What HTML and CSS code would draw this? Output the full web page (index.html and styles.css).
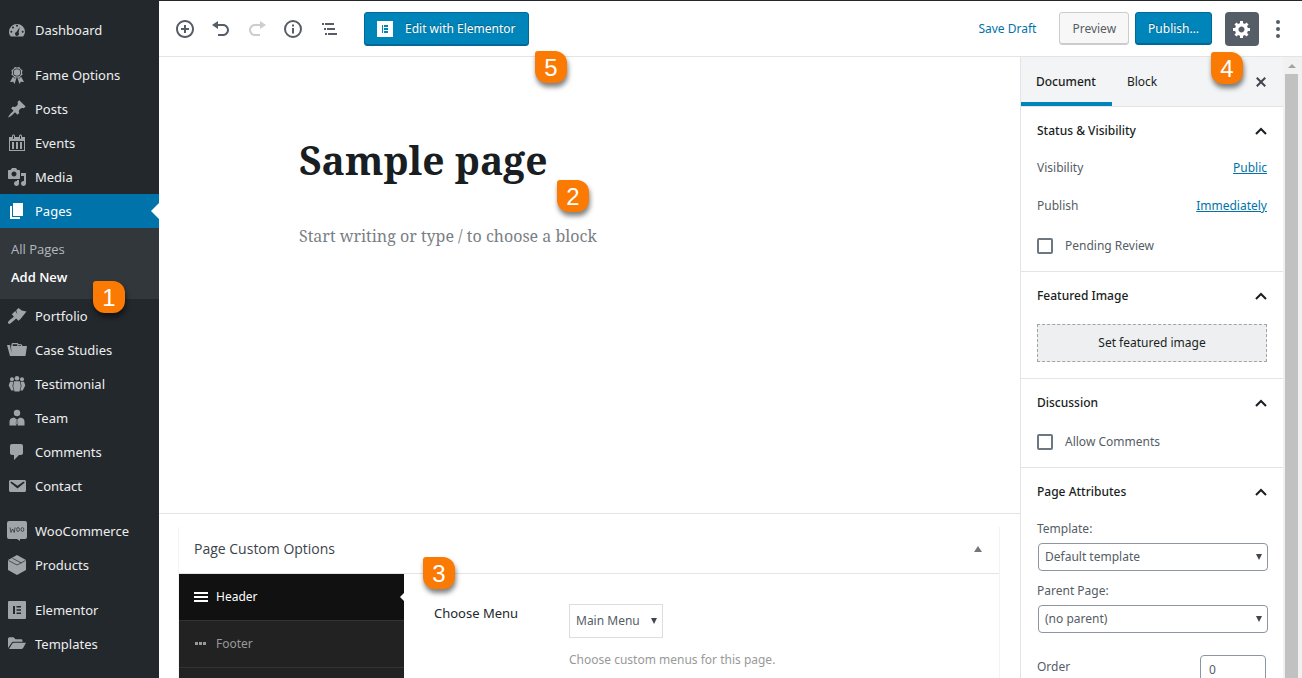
FILE: index.html
```html
<!DOCTYPE html>
<html lang="en">
<head>
<meta charset="utf-8">
<meta name="viewport" content="width=device-width, initial-scale=1">
<title>Edit Page</title>
<link rel="stylesheet" href="styles.css">
</head>
<body>
<div class="app">
  <nav class="sidebar" aria-label="Admin menu">
    <a class="item" href="#"><svg viewBox="0 0 20 20"><path fill-rule="evenodd" d="M3.8 16.5h12.4A8.2 8.2 0 0 0 18 12a8 8 0 1 0-16 0c0 1.700.6 3.300 1.800 4.500zM9 5.800a1 1 0 1 0 2 0a1 1 0 1 0-2 0zM5 7.500a1 1 0 1 0 2 0a1 1 0 1 0-2 0zM3.300 11.800a1 1 0 1 0 2 0a1 1 0 1 0-2 0zM14.700 11.800a1 1 0 1 0 2 0a1 1 0 1 0-2 0zM12.800 7l-1.200 5.600a2 2 0 1 1-2.200-.6z"/></svg>Dashboard</a>
    <a class="item spaced" href="#"><svg viewBox="0 0 20 20"><path fill-rule="evenodd" d="M4.460 5.160L5 7.460l-.54 2.290 2.010 1.240L7.700 13l2.300-.54 2.300.54 1.230-2.010 2.010-1.240L15 7.460l.54-2.300-2-1.240-1.240-2.010-2.300.55-2.290-.54-1.250 2zM10 11.500a4 4 0 1 1 0-8 4 4 0 0 1 0 8z"/><circle cx="10" cy="7.500" r="3.200"/><path d="M6 11.500l1.300 2 2.200-.4L7.500 19l-1.300-2.200L3 17zM14 11.500l-1.300 2-2.200-.4 2 5.900 1.300-2.200 3.200.2z"/></svg>Fame Options</a>
    <a class="item" href="#"><svg viewBox="0 0 20 20"><path d="M10.44 3.020l1.820-1.820 6.360 6.350-1.830 1.820c-1.050-.68-2.480-.57-3.410.36l-.75.75c-.92.93-1.040 2.350-.35 3.410l-1.830 1.820-2.410-2.410-2.800 2.790c-.42.42-3.380 2.710-3.800 2.290s1.860-3.390 2.280-3.810l2.790-2.790L4.100 9.360l1.830-1.820c1.050.69 2.480.57 3.400-.36l.75-.75c.93-.92 1.050-2.350.36-3.410z"/></svg>Posts</a>
    <a class="item" href="#"><svg viewBox="0 0 20 20"><path d="M15 4h3v14H2V4h3V3c0-.83.67-1.500 1.500-1.500S8 2.170 8 3v1h4V3c0-.83.67-1.500 1.500-1.500S15 2.170 15 3v1zM6 3v2.500c0 .28.22.5.5.5s.5-.22.5-.5V3c0-.28-.22-.5-.5-.5S6 2.720 6 3zm7 0v2.500c0 .28.22.5.5.5s.5-.22.5-.5V3c0-.28-.22-.5-.5-.5s-.5.22-.5.5zm4 14V8H3v9h14zM7 16V9H5v7h2zm4 0V9H9v7h2zm4 0V9h-2v7h2z"/></svg>Events</a>
    <a class="item" href="#"><svg viewBox="0 0 20 20"><path d="M13 11V4c0-.55-.45-1-1-1h-1.670L9 1H5L3.670 3H2c-.55 0-1 .45-1 1v7c0 .55.45 1 1 1h10c.55 0 1-.45 1-1zM7 4.500c1.380 0 2.500 1.120 2.500 2.500S8.380 9.500 7 9.500 4.500 8.380 4.500 7 5.620 4.500 7 4.500zM14 6h5v10.500c0 1.380-1.120 2.500-2.500 2.500S14 17.880 14 16.500s1.120-2.500 2.500-2.500c.17 0 .34.02.5.05V9h-3V6zm-4 8.050V13h2v3.500c0 1.380-1.120 2.500-2.500 2.500S7 17.880 7 16.500 8.120 14 9.500 14c.17 0 .34.02.5.05z"/></svg>Media</a>
    <a class="item current" href="#"><svg viewBox="0 0 20 20"><path d="M6 15V2h10v13H6zm-1 1h8v2H3V5h2v11z"/></svg>Pages</a>
    <div class="submenu">
      <a class="sub" href="#">All Pages</a>
      <a class="sub active" href="#">Add New</a>
      <span class="pin pin-1">1</span>
    </div>
    <a class="item" href="#"><svg viewBox="0 0 20 20"><path d="M9.200 4.200L11.500 2l3.300 2.600 4.700 1-6 7.400-1.800-.6zM8.300 5l5.200 8-2 1.800-2.400-2.200c-2.500 2.400-5 4.600-6.300 5.200-1 .4-2.300-.8-1.800-1.800.7-1.300 3.400-3.400 5.900-5.300L4.800 8.200z"/></svg>Portfolio</a>
    <a class="item" href="#"><svg viewBox="0 0 20 20"><path fill-rule="evenodd" d="M4 5.500h.5V4.500C4.500 3.500 5 3 6 3h4c.7 0 1.200.4 1.300 1l2.700.2c.6 0 1 .4 1.200 1l.1.800H20l-1.500 10H3L0 5h3l1.400 8zM5.700 6h4.600V4.200H5.700zM11.300 6h2.700v-.8h-2.700z"/></svg>Case Studies</a>
    <a class="item" href="#"><svg viewBox="0 0 20 20"><circle cx="10" cy="4.300" r="2.300"/><circle cx="5" cy="5.200" r="2"/><circle cx="15" cy="5.200" r="2"/><path d="M7 7.300h6l.8 5-1.300 5.200h-5l-1.300-5.200zM3 7.700h3.300L5.500 12l1.200 4.500H4.300L1.700 11.500zM17 7.700h-3.300l.8 4.300-1.200 4.500h2.400l2.600-5z"/></svg>Testimonial</a>
    <a class="item" href="#"><svg viewBox="0 0 20 20"><circle cx="10" cy="5" r="3.200"/><path d="M7 9.500L9.200 11 8.800 15.500l.6 2H2.500v-3.800c0-2.500 1.500-3.800 4.500-4.200zM13 9.500L10.800 11l.4 4.500-.6 2h6.900v-3.800c0-2.500-1.500-3.800-4.500-4.200zM9.500 11h1l.3 4.500-.8 1.500-.8-1.500z"/></svg>Team</a>
    <a class="item" href="#"><svg viewBox="0 0 20 20"><path d="M5 2h9c1.100 0 2 .9 2 2v7c0 1.100-.9 2-2 2h-2l-5 5v-5H5c-1.100 0-2-.9-2-2V4c0-1.100.9-2 2-2z"/></svg>Comments</a>
    <a class="item" href="#"><svg viewBox="0 0 20 20"><path d="M3.870 4h13.250C18.370 4 19 4.590 19 5.790v8.420c0 1.190-.63 1.790-1.880 1.790H3.870c-1.250 0-1.880-.6-1.880-1.790V5.790c0-1.200.63-1.790 1.880-1.790zm6.620 8.600l6.740-5.530c.24-.2.43-.66.13-1.070-.29-.41-.82-.42-1.170-.17l-5.700 3.860L4.800 5.830c-.35-.25-.88-.24-1.170.17-.3.41-.11.87.13 1.070z"/></svg>Contact</a>
    <a class="item spaced" href="#"><svg viewBox="0 0 20 20"><path d="M2 0h16a2 2 0 0 1 2 2v14a2 2 0 0 1-2 2h-5v2l-3-2H2a2 2 0 0 1-2-2V2a2 2 0 0 1 2-2z"/><path d="M3 6.500l1 5 1.600-3.500L7.300 11.500 8 6.500" fill="none" stroke="#23282d" stroke-width=".7"/><ellipse cx="11" cy="8.500" rx="1.400" ry="2" fill="none" stroke="#23282d" stroke-width=".7"/><ellipse cx="15.400" cy="8.500" rx="1.400" ry="2" fill="none" stroke="#23282d" stroke-width=".7"/></svg>WooCommerce</a>
    <a class="item" href="#"><svg viewBox="0 0 20 20"><path d="M10 0l9 5v10l-9 5-9-5V5z"/><path d="M1.500 5.500L10 10l8.500-4.500M5.500 3.300l9 4.700" fill="none" stroke="#23282d" stroke-width=".7"/></svg>Products</a>
    <a class="item spaced" href="#"><svg viewBox="0 0 20 20"><rect x="1" y="1" width="18" height="18" rx="1"/><path d="M6 6h2v8H6zM9.500 6H14v1.600H9.500zM9.500 9.200H14v1.600H9.500zM9.500 12.400H14V14H9.500z" fill="#23282d"/></svg>Elementor</a>
    <a class="item" href="#"><svg viewBox="0 0 20 20"><path d="M1 14V5c0-1 .6-1.700 1.500-1.700H6.500l2 2H14c1 0 1.500.6 1.500 1.500v1H7c-1.200 0-2 .4-2.700 1.500zM2 15l3.200-5.300c.4-.6.9-.9 1.600-.9H19L16 14.200c-.4.6-.9.8-1.600.8z"/></svg>Templates</a>
  </nav>

  <div class="workspace">
    <header class="toolbar">
      <button class="icon-btn" aria-label="Add block"><svg viewBox="0 0 20 20"><path d="M10 1c-5 0-9 4-9 9s4 9 9 9 9-4 9-9-4-9-9-9zm0 16c-3.900 0-7-3.100-7-7s3.100-7 7-7 7 3.100 7 7-3.100 7-7 7zm1-11H9v3H6v2h3v3h2v-3h3V9h-3V6z"/></svg></button>
      <button class="icon-btn" aria-label="Undo"><svg viewBox="0 0 20 20"><path d="M12 5H7V2L1 6l6 4V7h5c2.200 0 4 1.800 4 4s-1.800 4-4 4H7v2h5c3.300 0 6-2.700 6-6s-2.700-6-6-6z"/></svg></button>
      <button class="icon-btn faded" aria-label="Redo"><svg viewBox="0 0 20 20"><path d="M8 5h5V2l6 4-6 4V7H8c-2.200 0-4 1.800-4 4s1.800 4 4 4h5v2H8c-3.300 0-6-2.700-6-6s2.700-6 6-6z"/></svg></button>
      <button class="icon-btn" aria-label="Content structure"><svg viewBox="0 0 20 20"><path d="M10 1a9 9 0 1 0 0 18 9 9 0 0 0 0-18zm0 16a7 7 0 1 1 0-14 7 7 0 0 1 0 14zM9 9h2v5.500H9zM9 5.500h2v2H9z"/></svg></button>
      <button class="icon-btn outline" aria-label="Block navigation"><svg viewBox="0 0 18 18"><path d="M2 3h2v2H2zM5 3h9v2H5zM4 8h2v2H4zM7 8h8v2H7zM5 13h2v2H5zM8 13h9v2H8z"/></svg></button>
      <div class="elementor">
        <button class="btn primary edit-btn"><svg viewBox="0 0 16 16"><path fill="#fff" d="M0 0h16v16H0z"/><path fill="#0085ba" d="M5 4h1v8H5zM7 4h4v2H7zM7 7h4v2H7zM7 10h4v2H7z"/></svg>Edit with Elementor</button>
        <span class="pin pin-5">5</span>
      </div>
      <div class="actions">
        <a class="save" href="#">Save Draft</a>
        <button class="btn">Preview</button>
        <button class="btn primary">Publish…</button>
        <div class="settings">
          <button class="gear" aria-label="Settings"><svg viewBox="0 0 20 20"><path d="M18 12h-2.180c-.17.7-.44 1.350-.81 1.930l1.540 1.540-2.100 2.100-1.540-1.540c-.58.36-1.230.63-1.910.79V19H8v-2.180c-.68-.16-1.330-.43-1.910-.79l-1.540 1.540-2.120-2.120 1.540-1.540c-.36-.58-.63-1.230-.79-1.910H1V9.030h2.170c.16-.7.44-1.350.8-1.940L2.430 5.550l2.100-2.100 1.540 1.540c.58-.37 1.240-.64 1.930-.81V2h3v2.180c.68.16 1.330.43 1.910.79l1.540-1.540 2.120 2.120-1.540 1.540c.36.59.64 1.240.8 1.940H18V12zm-8.500 1.500c1.660 0 3-1.340 3-3s-1.340-3-3-3-3 1.340-3 3 1.340 3 3 3z"/></svg></button>
          <span class="pin pin-4">4</span>
        </div>
        <button class="more" aria-label="More options"><svg viewBox="0 0 8 20"><circle cx="4" cy="3" r="2"/><circle cx="4" cy="10" r="2"/><circle cx="4" cy="17" r="2"/></svg></button>
      </div>
    </header>

    <div class="body">
      <main class="main">
        <section class="canvas">
          <input class="title" type="text" aria-label="Page title" value="Sample page">
          <textarea class="content" rows="1" aria-label="Page content" placeholder="Start writing or type / to choose a block"></textarea>
          <span class="pin pin-2">2</span>
        </section>
        <section class="meta">
          <div class="metabox">
            <div class="meta-head"><h2>Page Custom Options</h2><button class="fold" aria-label="Toggle panel"><svg viewBox="0 0 8 6"><path d="M4 0l4 6H0z"/></svg></button></div>
            <div class="meta-body">
              <div class="meta-tabs">
                <button class="meta-tab on"><svg viewBox="0 0 14 14"><path d="M0 2h14v2H0zM0 6h14v2H0zM0 10h14v2H0z"/></svg>Header</button>
                <button class="meta-tab"><svg viewBox="0 0 14 14"><path d="M1 5h3v3H1zM5 5h3v3H5zM9 5h3v3H9z"/></svg>Footer</button>
              </div>
              <div class="meta-fields">
                <label for="menu">Choose Menu</label>
                <div class="field">
                  <span class="select boxy"><select id="menu"><option>Main Menu</option></select></span>
                  <p>Choose custom menus for this page.</p>
                </div>
              </div>
              <span class="pin pin-3">3</span>
            </div>
          </div>
        </section>
      </main>

      <aside class="panel">
        <div class="tabs">
          <button class="tab selected">Document</button>
          <button class="tab">Block</button>
          <button class="close" aria-label="Close settings"><svg viewBox="0 0 20 20"><path d="M14.950 6.460L11.410 10l3.540 3.540-1.410 1.410L10 11.420l-3.530 3.530-1.420-1.420L8.580 10 5.050 6.470l1.420-1.420L10 8.580l3.540-3.530z"/></svg></button>
        </div>
        <section class="group">
          <h2><button class="toggle">Status &amp; Visibility<svg viewBox="0 0 12 8"><path d="M1 7l5-5 5 5"/></svg></button></h2>
          <div class="row"><span>Visibility</span><a href="#">Public</a></div>
          <div class="row"><span>Publish</span><a href="#">Immediately</a></div>
          <div class="row check last"><input type="checkbox" id="pending"><label for="pending">Pending Review</label></div>
        </section>
        <section class="group">
          <h2><button class="toggle">Featured Image<svg viewBox="0 0 12 8"><path d="M1 7l5-5 5 5"/></svg></button></h2>
          <button class="featured">Set featured image</button>
        </section>
        <section class="group">
          <h2><button class="toggle">Discussion<svg viewBox="0 0 12 8"><path d="M1 7l5-5 5 5"/></svg></button></h2>
          <div class="check comments"><input type="checkbox" id="comments"><label for="comments">Allow Comments</label></div>
        </section>
        <section class="group">
          <h2><button class="toggle">Page Attributes<svg viewBox="0 0 12 8"><path d="M1 7l5-5 5 5"/></svg></button></h2>
          <div class="attr"><label for="template">Template:</label><span class="select"><select id="template"><option>Default template</option></select></span></div>
          <div class="attr"><label for="parent">Parent Page:</label><span class="select"><select id="parent"><option>(no parent)</option></select></span></div>
          <div class="order"><label for="order">Order</label><input id="order" type="text" value="0"></div>
        </section>
      </aside>
      <div class="scrollbar"><svg viewBox="0 0 8 4"><path d="M4 0l4 4H0z"/></svg><div class="thumb"></div></div>
    </div>
  </div>
</div>
</body>
</html>
```
FILE: styles.css
```css
* { box-sizing: border-box; }
body {
  margin: 0;
  background: #fff;
  color: #555d66;
  font: 12px/18px "Noto Sans", "Open Sans", sans-serif;
}
button, input, select, textarea { font: inherit; color: inherit; margin: 0; }
button { border: 0; padding: 0; background: none; cursor: pointer; }
h1, h2, p { margin: 0; font: inherit; }
svg { display: block; fill: currentColor; flex: none; }
.app { display: flex; height: 100vh; overflow: hidden; }

/* Admin menu */
.sidebar { width: 159px; flex: none; padding-top: 13px; background: #23282d; font-size: 13px; }
.item {
  display: flex;
  align-items: center;
  gap: 8px;
  height: 34px;
  padding-left: 7px;
  color: #eee;
  text-decoration: none;
  white-space: nowrap;
}
.item svg { width: 20px; height: 20px; color: #a0a5aa; }
.item.spaced { margin-top: 11px; }
.item.current { position: relative; background: #0073aa; color: #fff; }
.item.current svg { color: #fff; }
.item.current::after {
  content: "";
  position: absolute;
  right: 0;
  top: 9px;
  border: 8px solid transparent;
  border-left: 0;
  border-right-color: #fff;
}
.submenu { position: relative; padding: 7px 0 8px; background: #32373c; }
.sub { display: block; padding: 5px 11px; color: #b4b9be; text-decoration: none; font-family: "Open Sans", sans-serif; }
.sub.active { color: #fff; font-weight: 600; }

/* Numbered callouts */
.pin {
  position: absolute;
  z-index: 5;
  width: 32px;
  height: 32px;
  border-radius: 3px 12px 12px 12px;
  background: #fb7a04;
  box-shadow: 1px 4px 5px rgba(0, 0, 0, .5);
  color: #fff;
  font: 24px/34px "Liberation Sans", Arial, sans-serif;
  text-align: center;
}
.pin-1 { left: 93px; top: 53px; }
.pin-2 { left: 398px; top: 123px; }
.pin-3 { left: 244px; top: -17px; }
.pin-4 { right: 16px; top: 40px; }
.pin-5 { left: 171px; top: 39px; }

/* Toolbar */
.workspace { flex: 1; min-width: 0; display: flex; flex-direction: column; }
.toolbar {
  display: flex;
  align-items: center;
  height: 57px;
  flex: none;
  padding: 0 20px 0 8px;
  border-top: 1px solid #23282d;
  border-bottom: 1px solid #e2e4e7;
}
.icon-btn { display: grid; place-items: center; width: 36px; height: 36px; color: #555d66; }
.icon-btn svg { width: 20px; height: 20px; }
.icon-btn.outline svg { width: 18px; height: 18px; }
.faded { opacity: .3; }
.elementor { position: relative; margin-left: 17px; }
.btn {
  height: 33px;
  padding: 0 12px;
  border: 1px solid #ccc;
  border-radius: 3px;
  background: #f7f7f7;
  box-shadow: inset 0 -1px 0 #ccc;
  white-space: nowrap;
}
.btn.primary {
  border-color: #006a95;
  background: #0085ba;
  box-shadow: inset 0 -1px 0 #006799;
  color: #fff;
  text-shadow: 0 -1px 1px #005d82;
}
.edit-btn { display: flex; align-items: center; gap: 12px; height: 34px; }
.edit-btn svg { width: 16px; height: 16px; }
.actions { display: flex; align-items: center; margin-left: auto; }
.save { margin-right: 23px; color: #0073aa; text-decoration: none; }
.actions .primary { margin-left: 6px; }
.settings { position: relative; margin-left: 13px; }
.gear { display: grid; place-items: center; width: 34px; height: 34px; border-radius: 4px; background: #555d66; color: #fff; }
.gear svg { width: 20px; height: 20px; }
.more { margin-left: 15px; color: #555d66; }
.more svg { width: 8px; height: 20px; }

/* Editor */
.body { display: flex; flex: 1; min-height: 0; }
.main { flex: 1; min-width: 0; overflow: hidden; }
.canvas { position: relative; min-height: 456px; padding: 75px 140px 0; }
.title, .content { display: block; width: 100%; border: 0; padding: 0; outline: 0; background: none; font-family: "Noto Serif", "DejaVu Serif", serif; }
.title { height: 54px; color: #191e23; font-size: 39px; font-weight: 700; }
.content { height: 24px; margin-top: 38px; font-size: 16px; line-height: 24px; resize: none; overflow: hidden; }
.content::placeholder { color: #7a7f85; opacity: 1; }
.meta { padding: 13px 20px 0; border-top: 1px solid #e2e4e7; }
.metabox { border: 1px solid #f3f3f3; border-width: 0 1px; margin-left: -1px; }
.meta-head {
  display: flex;
  align-items: center;
  justify-content: space-between;
  height: 47px;
  padding: 0 17px 2px 15px;
  border-bottom: 1px solid #e2e4e7;
  color: #3c434a;
  font: 14px/18px "Open Sans", sans-serif;
}
.fold svg { width: 8px; height: 6px; color: #72777c; }
.meta-body { display: flex; position: relative; min-height: 240px; }
.meta-tabs { width: 225px; flex: none; background: #222; }
.meta-tab {
  display: flex;
  align-items: center;
  gap: 8px;
  position: relative;
  width: 100%;
  height: 47px;
  padding-left: 15px;
  border-bottom: 1px solid #333;
  color: #999;
}
.meta-tab svg { width: 14px; height: 14px; }
.meta-tab.on { background: #111; color: #fff; }
.meta-tab.on::after {
  content: "";
  position: absolute;
  right: 0;
  top: 19px;
  border: 4px solid transparent;
  border-left: 0;
  border-right-color: #fff;
}
.meta-fields { display: flex; padding: 30px 30px 0; }
.meta-fields > label { width: 135px; color: #23282d; font-size: 13px; }
.field p { margin-top: 13px; color: #999; }

/* Selects */
.select { display: block; position: relative; }
.select select {
  display: block;
  width: 100%;
  height: 28px;
  padding: 0 16px 0 6px;
  border: 1px solid #8d96a0;
  border-radius: 4px;
  background: #fff;
  appearance: none;
}
.select::after {
  content: "";
  position: absolute;
  right: 6px;
  top: 11px;
  border: 3px solid transparent;
  border-top: 6px solid #40464d;
  border-bottom: 0;
  pointer-events: none;
}
.select.boxy { width: 94px; }
.select.boxy select { height: 34px; border-color: #ddd; border-radius: 0; }
.select.boxy::after { top: 14px; }

/* Settings panel */
.panel { width: 263px; flex: none; border-left: 1px solid #e2e4e7; overflow: hidden; }
.tabs { display: flex; height: 50px; border-bottom: 1px solid #e2e4e7; background: #f3f4f5; color: #191e23; }
.tab { padding: 4px 15px 0; border-bottom: 4px solid transparent; }
.tab.selected { padding: 4px 16px 0 15px; border-color: #0085ba; font-weight: 500; }
.close { margin-left: auto; margin-right: 12px; color: #40464d; }
.close svg { width: 20px; height: 20px; }
.group { padding: 0 16px 16px; border-bottom: 1px solid #e2e4e7; }
.toggle { display: flex; align-items: center; justify-content: space-between; width: 100%; height: 49px; padding-bottom: 2px; color: #191e23; font-weight: 500; }
.toggle svg { width: 12px; height: 8px; fill: none; stroke: currentColor; stroke-width: 2; }
.row { display: flex; align-items: center; justify-content: space-between; height: 24px; margin-bottom: 14px; }
.row a { color: #0073aa; }
.check { display: flex; align-items: center; justify-content: flex-start; gap: 12px; }
.check input { appearance: none; width: 16px; height: 16px; border: 2px solid #6c7781; border-radius: 2px; background: #fff; }
.row.last { margin: 16px 0 -3px; }
.featured { display: block; width: 100%; height: 38px; margin-top: 3px; border: 1px dashed #a0a5aa; background: #edeff0; color: #191e23; }
.comments { height: 23px; padding-top: 4px; }
.attr { margin-bottom: 11px; }
.attr label { display: block; height: 23px; line-height: 24px; }
.attr .select { margin: 3px -1px 0 1px; }
.attr:nth-of-type(2) label { height: 20px; line-height: 18px; }
.order { display: flex; justify-content: space-between; margin-top: 22px; line-height: 24px; }
.order input { width: 66px; height: 28px; margin-right: 1px; padding: 0 8px; border: 1px solid #8d96a0; border-radius: 4px; }

/* Scroll track */
.scrollbar { display: flex; flex-direction: column; align-items: center; width: 19px; flex: none; padding: 7px 2px 0 0; background: #f1f1f1; }
.scrollbar svg { width: 8px; height: 4px; color: #a3a3a3; }
.thumb { flex: 1; width: 13px; margin-top: 6px; background: #c1c1c1; }
```
